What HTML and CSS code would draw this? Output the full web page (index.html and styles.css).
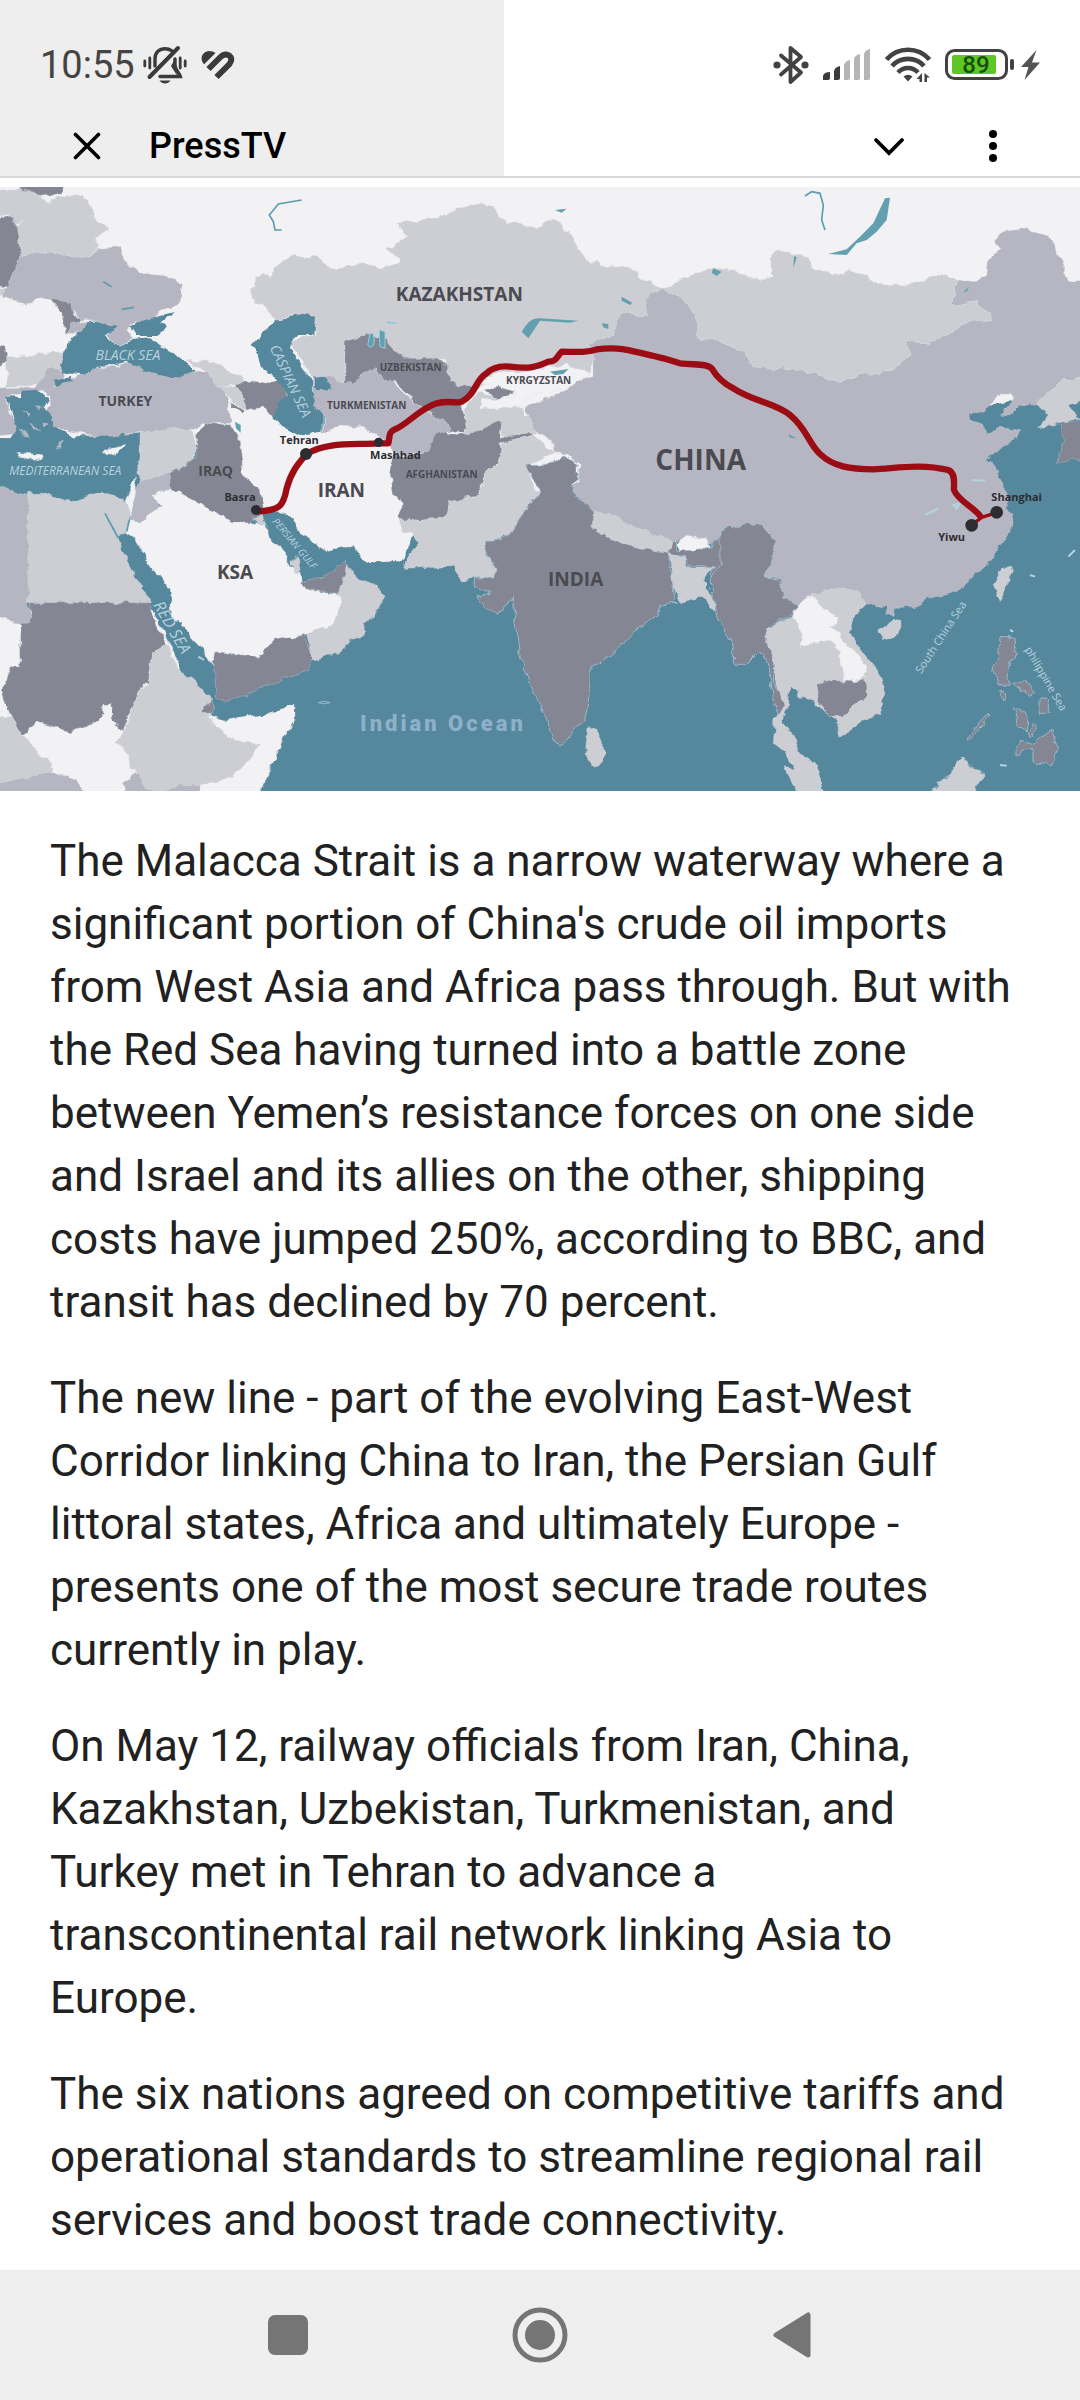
FILE: index.html
```html
<!DOCTYPE html>
<html lang="en">
<head>
  <meta charset="UTF-8" />
  <meta name="viewport" content="width=device-width, initial-scale=1.0"/>
  <title>PressTV</title>
  <link rel="stylesheet" href="styles.css">
</head>
<body>

<header class="top">
  <!-- Status bar -->
  <div class="status-bar">
    <div class="status-left">
      <span class="time">10:55</span>
      <svg class="bell" width="44" height="40" viewBox="0 0 44 40" fill="none" stroke="#3b3b3b" stroke-width="3.4" stroke-linecap="round">
        <path d="M1.8 16v5M6.8 13v10M37.2 13v10M42.2 16v5" stroke-width="2.8"/>
        <path d="M12 21v-7.500C12 7.500 16.500 3.700 22 3.700c2.800 0 5 .8 6.500 2"/>
        <path d="M32 14l-4 7 6 9.500z" fill="#3b3b3b" stroke="none"/>
        <path d="M32 14v6c0 5 4 7 5.300 11.500H17"/>
        <path d="M6.500 32L35 3" stroke-width="4"/>
        <path d="M16.500 35.500h11c-2.500 4-8.500 4-11 0z" fill="#3b3b3b" stroke="none"/>
      </svg>
      <svg class="heart" width="34" height="30" viewBox="0 0 34 30" fill="none" stroke="#3b3b3b" stroke-width="6">
        <path d="M8.500 1c2.500 0 4.300.7 6 2L3.200 14.300C-2.500 8.500 2 1 8.500 1z" fill="#3b3b3b" stroke="none"/>
        <path d="M7.500 19L19.500 7C25.500 1 34 7 28.500 14L15.500 27"/>
      </svg>
    </div>
    <div class="status-right">
      <svg class="bluetooth" width="36" height="40" viewBox="0 0 36 40" fill="none" stroke="#424242" stroke-width="3.800" stroke-linecap="round" stroke-linejoin="round">
        <path d="M8 10.500L28 27.500 17.500 37V3L28 12 8 29.500"/>
        <circle cx="4" cy="20" r="3.600" fill="#424242" stroke="none"/>
        <circle cx="32" cy="20" r="3.600" fill="#424242" stroke="none"/>
      </svg>
      <svg class="signal" width="48" height="32" viewBox="0 0 48 32">
        <path d="M0 31v-4q1-4 7-4v6q0 2-2 2z" fill="#3b3b3b"/>
        <path d="M11 31V22q1-4 6-5v12q0 2-2 2z" fill="#3b3b3b"/>
        <path d="M21 31V16q1-4 6-5v18q0 2-2 2zM31 31V10q1-4 6-5v24q0 2-2 2zM41 31V5q1-4 6-5v29q0 2-2 2z" fill="#b5b5b5"/>
      </svg>
      <svg class="wifi" width="46" height="36" viewBox="0 0 46 36" fill="none" stroke="#424242" stroke-width="4.600">
        <path d="M1.500 12.500C13-0.500 33-0.500 44.500 12.500"/>
        <path d="M7 19C15.500 9.500 30.500 9.500 39 19"/>
        <path d="M13 25.500C18.500 19.500 27.500 19.500 33 25.500"/>
        <path d="M18.500 29.500q4.500-3.500 9 0L23 34.500z" fill="#424242" stroke="none"/>
        <path d="M37 26v9h-2.500v-3L31.500 32zM39.500 35v-9L45 30.500h-3V35z" fill="#424242" stroke="none"/>
      </svg>
      <svg class="battery" width="70" height="32" viewBox="0 0 70 32">
        <rect x="1.500" y="1.500" width="60" height="28" rx="8" fill="#fff" stroke="#424242" stroke-width="3"/>
        <rect x="7" y="6" width="44" height="19" rx="2" fill="#5fc626"/>
        <rect x="65" y="10" width="4" height="11" rx="2" fill="#424242"/>
        <text class="battery-level" x="31" y="24" text-anchor="middle">89</text>
      </svg>
      <svg class="bolt" width="19" height="30" viewBox="0 0 19 30">
        <path d="M15.500 0L0 17h7.500L3.500 30 19 12.500h-8z" fill="#555"/>
      </svg>
    </div>
  </div>

  <!-- Browser bar -->
  <div class="app-bar">
    <button class="icon-btn" aria-label="Close">
      <svg width="28" height="28" viewBox="0 0 28 28" fill="none" stroke="#000" stroke-width="3.600" stroke-linecap="round"><path d="M2.500 2.500l23 23M25.500 2.500l-23 23"/></svg>
    </button>
    <h1>PressTV</h1>
    <button class="icon-btn" aria-label="Minimize">
      <svg width="32" height="20" viewBox="0 0 32 20" fill="none" stroke="#000" stroke-width="3.800" stroke-linecap="round"><path d="M3 4l13 13L29 4"/></svg>
    </button>
    <button class="icon-btn" aria-label="More options">
      <svg width="10" height="34" viewBox="0 0 10 34"><circle cx="5" cy="5" r="4"/><circle cx="5" cy="17" r="4"/><circle cx="5" cy="29" r="4"/></svg>
    </button>
  </div>
</header>

<main>
  <svg class="map" viewBox="0 21 3240 1812" role="img" aria-label="Rail route from China to Iran">
    <defs>
      <filter id="coast" x="-5%" y="-5%" width="110%" height="110%" color-interpolation-filters="sRGB">
        <feTurbulence type="fractalNoise" baseFrequency="0.03" numOctaves="3" seed="4" result="noise"/>
        <feDisplacementMap in="SourceGraphic" in2="noise" scale="24" xChannelSelector="R" yChannelSelector="G"/>
      </filter>
    </defs>
    <rect class="sea" y="21" width="3240" height="1812"/>

    <g filter="url(#coast)">
      <!-- Base land -->
      <path class="white" d="M-40-20H3280V595L2900 700 2900 800 2000 1050 1900 900 1250 1050 1200 1150 1090 1145 1060 1095 980 1115 900 1060 860 1000 800 990 600 800 430 760-40 780z"/>
      <path class="white" d="M-40 1290H460L560 1500 640 1610 680 1620 790 1605 885 1575 885 1620 850 1680 820 1750 765 1870H-40z"/>

      <!-- Eastern Europe -->
      <path class="light" d="M-40 30H110L145 70 110 120 40 130 25 108-40 105z"/>
      <path class="dark" d="M45-20H192L185 40 145 52 110 38 60 30z"/>
      <path class="light" d="M50 200L45 135 110 110 150 60 200 42 260 55 280 110 325 150 290 170 295 205 260 235 130 215 60 230z"/>
      <path class="dark" d="M-40 112H45L58 200 60 270 20 320-40 315z"/>
      <path class="light" d="M-40 320L20 325 10 345-40 380z"/>
      <path class="mid" d="M10 340L60 230 130 215 260 235 300 205 360 200 375 240 400 260 415 275 500 285 550 315 540 370 490 390 460 410 400 430 380 450 400 475 360 500 325 470 340 445 300 425 240 420 210 370 150 355 70 370 10 355z"/>
      <path class="dark" d="M150 352L215 370 222 400 240 420 205 450 195 465 185 400z"/>
      <path class="mid" d="M200 460L215 430 245 425 270 430 235 460z"/>
      <path class="dark" d="M-40 495L15 500 25 550-40 580z"/>
      <path class="light" d="M20 530L90 530 150 515 205 520 190 575 130 610 20 620z"/>
      <path class="mid" d="M-40 625L110 620 150 560 190 575 190 600 120 640 60 640 20 655 30 700 70 760-40 770z"/>
      <path class="mid" d="M125 630L200 600 300 565 400 550 470 585 580 575 640 570 670 620 690 700 690 730 620 730 560 750 430 755 320 770 240 760 160 740 140 700 150 650z"/>
      <path class="light" d="M560 540L640 550 730 590 735 615 660 620 620 575z"/>
      <path class="light" d="M660 620L720 625 745 690 700 670z"/>
      <path class="dark" d="M705 620L740 600 800 610 840 600 860 650 820 715 790 675 740 690 725 640z"/>
      <path class="dark" d="M690 670L735 690 725 700 700 685z"/>

      <!-- Central Asia -->
      <path class="light" d="M755 340L765 300 790 280 810 295 820 265 880 225 960 235 990 268 1080 250 1140 265 1200 250 1200 235 1160 210 1190 190 1220 170 1190 130 1300 115 1440 70 1480 80 1495 120 1560 130 1600 145 1660 115 1700 150 1765 255 1785 240 1820 260 1880 255 1930 300 1985 325 1940 350 1940 405 1860 400 1840 470 1765 490 1785 545 1770 580 1700 555 1560 575 1480 590 1440 620 1360 620 1340 595 1330 540 1210 545 1130 490 1035 480V612L940 590 880 500 860 480 945 465 940 410 880 403 820 425 800 380 765 370z"/>
      <path class="mid" d="M940 590L1000 590 1035 612 1080 590 1120 565 1150 580 1190 620 1230 655 1270 690 1355 735V755L1320 760 1290 810 1190 825 1160 780 1080 740 1020 735 970 755V700L940 690z"/>
      <path class="dark" d="M1035 480L1100 463 1160 480 1210 535H1310L1340 560 1345 600 1380 620 1440 620 1400 655 1380 680 1400 720 1390 760 1350 750 1340 730 1260 680 1230 650 1190 610 1160 600 1150 580 1120 565 1080 590 1060 610 1035 612z"/>
      <path class="light" d="M1390 690L1430 640 1500 650 1440 680 1570 685 1575 710 1600 710 1610 760 1560 770 1510 780 1500 730 1470 745 1440 760 1390 765 1400 720z"/>
      <path class="white" d="M1440 610L1480 580 1560 575 1700 555 1770 580 1740 600 1700 625 1580 650 1560 680 1480 690 1440 680V660L1540 650 1545 635 1500 620z"/>
      <path class="dark" d="M1450 630L1490 618 1545 635 1500 655 1480 645z"/>
      <path class="dark" d="M1185 830L1290 810 1310 755 1390 765 1450 750 1485 720 1505 725 1500 775 1560 760 1590 755 1600 765 1520 785 1500 790 1505 820 1490 850 1460 870 1440 920 1435 945 1400 950 1350 975 1345 1010 1260 1025 1190 1010 1210 970 1180 940 1170 880z"/>
      <path class="light" d="M1190 1010L1260 1025 1345 1010 1350 965 1435 945 1450 900 1460 870 1495 850 1505 790 1600 765 1640 800 1670 820 1590 845V880L1600 930 1620 935 1570 1000 1530 1060 1480 1080 1450 1080 1470 1140 1490 1170 1485 1190 1420 1195 1390 1205 1360 1160 1210 1165 1220 1130 1260 1095 1240 1060 1210 1050z"/>

      <!-- Mongolia and China -->
      <path class="mid" d="M1575 680L1700 630 1740 600 1785 590V545L1765 490 1840 470 1860 400 1940 405V350L1985 325 2060 365 2090 400V470L2160 482 2225 515 2260 560 2410 572 2515 605 2600 580 2660 575 2730 525 2720 485 2790 488 2850 460 2890 430 2975 418 2970 400 2930 365 2850 375 2875 300 2920 308 2960 290 2965 240 3000 205 2980 180 3000 160 3080 147 3150 170 3180 230 3205 305H3280V590L3185 600 3140 640 3110 668 3060 680 3025 708 3005 705 3045 655 3035 636 3005 638 2970 682 2950 695 2910 700 2912 722 2945 730 2955 758 2970 760 3000 742 3060 755 3050 775 3005 800 2960 838 2990 870 3010 920 3030 950 3010 985 3045 1005 3035 1050 2990 1105 2965 1150 2900 1210 2860 1240 2790 1255 2750 1275 2690 1285 2680 1310 2660 1300 2665 1280 2600 1275 2575 1235 2530 1222 2450 1245 2400 1280 2350 1250 2345 1200 2295 1190 2325 1110V1085L2285 1035 2240 1030 2180 1055 2125 1095 2100 1075 2060 1065 2020 1090 1960 1065 1900 1040 1830 1000 1780 995 1730 945 1715 920 1740 905 1735 860 1700 820 1665 815 1660 780 1620 760 1600 740 1590 710z"/>
      <path class="light" d="M1985 325L2060 290 2140 265 2200 270 2240 290 2290 300 2310 290V230L2340 208 2430 235 2440 265 2500 285 2550 272 2600 290 2630 312 2700 320 2760 310 2810 282 2875 298 2850 375 2930 365 2970 400 2975 418 2890 430 2850 460 2790 488 2720 485 2730 525 2660 575 2600 580 2515 605 2410 572 2260 560 2225 515 2160 482 2090 470V400L2060 365z"/>
      <path class="light" d="M3105 665L3140 640 3190 600 3280 590V655L3205 675 3235 715 3160 735 3120 740 3140 700z"/>
      <path class="dark" d="M3180 730L3280 715V830L3170 850 3185 780z"/>

      <!-- Middle East -->
      <path class="light" d="M420 755L560 745 585 750V840L510 880 430 910 410 880 420 830z"/>
      <path class="mid" d="M430 900L510 880 520 925 455 945 480 980 450 1000 440 1020H390L410 930z"/>
      <path class="white" d="M405 890L412 920 390 1010 375 960z"/>
      <path class="white" d="M390 1020H440L450 1000 480 975 455 945 520 925 570 930 620 965 690 1025H750L790 1040 830 1090 870 1150 910 1200 930 1230 1020 1245 1025 1270 1005 1330 920 1365 830 1380 770 1430 690 1420 650 1415 635 1450 600 1395 520 1310 510 1230 460 1170 400 1070 380 1060z"/>
      <path class="dark" d="M620 730L690 735 720 780 730 850 720 880 780 930 790 985 750 1025H690L580 960 515 925 510 880 590 840V760z"/>
      <path class="light" d="M755 1015L785 1000 800 1040 775 1035z"/>
      <path class="dark" d="M650 1415L770 1430 830 1380 910 1365 940 1435 920 1475 820 1510 690 1560H650L635 1440z"/>
      <path class="light" d="M920 1365L1005 1330 1025 1260 1010 1240 1035 1150 1050 1170 1080 1200 1130 1220 1155 1255 1120 1310 1095 1325 1090 1365 1050 1385 1020 1415 940 1440z"/>
      <path class="dark" d="M905 1200L970 1195 1040 1140 1035 1180 1015 1240 930 1230z"/>
      <path class="light" d="M875 1140L895 1130 900 1170 885 1185z"/>

      <!-- Africa -->
      <path class="mid" d="M-40 905L40 930 85 945V1268L95 1330 60 1335-40 1300z"/>
      <path class="light" d="M80 940L140 940 210 965 300 940 370 955 390 1000 380 1060 350 1065 315 1000 360 1090 410 1200 455 1268H85z"/>
      <path class="dark" d="M92 1268H450L465 1330 500 1390 455 1420 440 1500 380 1610 370 1650 340 1620 335 1570H310V1610L260 1640 210 1655 110 1625 75 1665H50L30 1600 10 1550 5 1530 30 1460H62V1330H92z"/>
      <path class="light" d="M500 1390L530 1460 600 1520 640 1560 630 1600 640 1640 700 1680 785 1690 700 1790 600 1820 540 1815 480 1840 440 1830 400 1770 370 1700 340 1690 370 1660 400 1570 440 1510 455 1420z"/>
      <path class="dark" d="M605 1580L640 1560 635 1600 605 1600z"/>
      <path class="light" d="M-40 1610H40L60 1660 150 1750 160 1780-40 1815z"/>
      <path class="mid" d="M-40 1815L150 1780 230 1800 280 1870H-40z"/>
      <path class="mid" d="M370 1810L410 1775 440 1830 480 1838 540 1815 600 1820V1870H390z"/>

      <!-- South Asia -->
      <path class="dark coastline" d="M1580 850L1650 850 1690 825 1720 850 1735 880V900L1715 915 1730 950 1790 1000 1770 1040 1850 1085 1940 1110 2010 1120V1075L2030 1085V1110H2130L2140 1080 2180 1050 2230 1030 2200 1110 2160 1200 2130 1190 2140 1160 2060 1155V1130L2010 1125V1160L2020 1200 2030 1270 1980 1275 1975 1310 1920 1340 1880 1380 1830 1430 1790 1450 1770 1465V1530L1755 1620 1730 1640 1700 1680 1680 1692 1660 1680 1640 1620 1600 1540 1560 1430 1545 1330 1540 1250 1520 1280 1490 1303 1460 1290 1430 1250 1470 1235 1420 1215V1195L1485 1190 1490 1170 1470 1140 1450 1080 1480 1080 1530 1060 1600 960 1620 935 1600 900z"/>
      <path class="light" d="M1790 995L1830 1000 1900 1040 1960 1065 2020 1080 2008 1120 1940 1110 1850 1085 1770 1040z"/>
      <path class="white" d="M2030 1095L2050 1065 2100 1070 2128 1085 2130 1108 2040 1112z"/>
      <path class="light" d="M2010 1120L2060 1135V1160L2140 1162 2110 1200 2140 1250 2150 1300 2130 1290 2110 1245 2040 1270 2020 1200z"/>
      <path class="light" d="M1765 1640L1790 1650 1820 1720 1810 1750 1775 1757 1755 1720z"/>

      <!-- South East Asia -->
      <path class="dark coastline" d="M2160 1060L2200 1038 2240 1030 2285 1035 2325 1085V1110L2295 1190 2345 1200 2350 1250 2400 1280 2370 1310 2310 1335 2295 1370 2325 1450 2320 1500 2350 1570V1600L2335 1610 2320 1550 2305 1450 2280 1410 2240 1450H2200V1400L2160 1320 2150 1290 2130 1200 2160 1150z"/>
      <path class="light" d="M2305 1340L2370 1315 2400 1290 2430 1245 2530 1220 2575 1235 2600 1275 2560 1310 2545 1350 2590 1420 2640 1480 2655 1540 2640 1600 2580 1630 2520 1675 2515 1640 2480 1600 2440 1560 2395 1550V1527H2370L2365 1580 2345 1620 2370 1660 2400 1720 2450 1750 2475 1870H2400L2380 1760 2350 1710 2320 1690 2325 1620 2350 1580 2325 1500V1450L2295 1370z"/>
      <path class="white" d="M2420 1250H2440L2470 1290 2515 1310 2510 1335 2490 1340 2540 1390 2600 1460V1490L2550 1510 2530 1500 2520 1420 2490 1380 2400 1400 2405 1350 2380 1320V1295z"/>
      <path class="dark" d="M2450 1510L2490 1500 2560 1505 2595 1500 2600 1550 2560 1580 2530 1615 2490 1610 2460 1570z"/>
      <path class="light" d="M2635 1350L2680 1320 2705 1325 2690 1365 2650 1382z"/>
      <path class="light" d="M3035 1158L3030 1200 3000 1265 2980 1220 3000 1170z"/>
      <path class="light" d="M2355 1760L2420 1770 2500 1870H2400z"/>
      <path class="light" d="M2780 1850L2840 1790 2890 1725 2910 1760 2955 1780 2910 1870H2780z"/>
      <path class="dark coastline" d="M3000 1370L3045 1370 3048 1420 3020 1480 3030 1510 3000 1510 2975 1470 2995 1430zM3000 1530L3020 1540 3018 1565 3000 1550zM3035 1510L3075 1505 3105 1540 3090 1550zM3040 1580L3080 1600 3080 1650 3055 1640zM3120 1555L3145 1560 3145 1600 3120 1600zM3100 1630L3110 1640 3095 1670 3085 1660zM3100 1690L3155 1650 3175 1710 3145 1760 3100 1740 3095 1705 3045 1730 3045 1700 3070 1680zM2965 1600L2970 1610 2905 1685 2895 1680z"/>

      <!-- Inland seas -->
      <path class="sea" d="M270 425L300 425 350 445 320 470 360 500 400 480 450 475 520 520 592 570 550 590 470 585 380 548 310 560 250 583 182 575 200 500 235 460z"/>
      <path class="sea" d="M392 440L430 415 528 396 480 430 498 435 472 468 408 468z"/>
      <path class="sea" d="M160 600L210 588 215 606 170 614z"/>
      <path class="sea" d="M20 650L60 655 65 632 105 630 145 655 130 680 150 700 160 740 200 755 240 790H-40V772L30 780 55 745 35 700z"/>
      <path class="white" d="M310 812L345 800 385 793 350 822 320 830zM50 820L130 828 120 840 55 832z"/>
      <path class="mid" d="M70 690L90 700 85 712zM110 680L125 685 118 695zM90 730L120 750 105 750zM170 800L190 785 180 808zM60 750L85 770 70 770zM130 725L145 735 130 740z"/>
      <path class="sea" d="M820 425L890 403 945 410 940 465 885 465 870 500 905 560 935 590 945 690 968 700V755L900 765 850 740 820 715 830 670 860 645 830 600 785 560 775 520 755 495 790 455z"/>
      <path class="sea" d="M945 595L970 590 990 630 945 630z"/>
    </g>

    <!-- Lakes -->
    <path class="lake" d="M2655 55L2670 53 2660 120 2630 155 2600 180 2570 190 2540 225 2485 222 2540 208 2580 170 2620 130z"/>
    <path class="lake" d="M1565 455Q1590 410 1620 415L1735 422 1710 428 1620 422 1585 475z"/>
    <path class="lake" d="M1650 575L1705 567 1690 582 1665 585zM1805 430L1825 432V447L1810 442zM1865 350L1897 368 1890 375 1865 362zM2140 265L2165 275 2150 288 2135 278zM2382 228L2390 232 2380 265zM1665 90L1700 86 1685 98zM2890 335L2908 320 2900 335zM2365 762L2390 775 2370 773zM705 725L722 735 722 758 708 745z"/>
    <path class="lake aral" d="M1110 460Q1125 455 1122 490 1115 510 1103 495zM1138 450L1155 455 1155 505 1140 500zM1160 425L1190 430 1165 430z"/>
    <path class="river" d="M905 60L835 72 808 105 820 125 825 150 845 150M2415 48L2435 35 2460 40 2470 75 2465 120 2475 150M310 305L335 320M365 388L402 382"/>
    <path class="river" d="M315 1000L355 1075M388 1020L380 1055"/>
    <path class="islands" d="M2860 975L2880 970 2870 985zM2775 1005L2815 985M3090 1185L3105 1190M3205 1130L3225 1110M3030 1350L3040 1355M3000 1755L3020 1757M2450 1820L2465 1818M2955 902L2915 900M595 1430L612 1440"/>
    <path class="outline" d="M955 1568Q975 1560 990 1568 975 1575 955 1568z"/>

    <!-- Route -->
    <path class="route" d="M770 995C840 990 850 980 860 925 875 870 900 845 920 822 980 785 1060 795 1135 790H1165C1170 770 1165 755 1185 748 1220 735 1260 685 1310 670 1350 660 1370 672 1385 665 1430 640 1425 600 1460 580 1480 560 1510 558 1530 560 1590 568 1610 560 1645 545 1670 545 1670 530 1685 515 1720 515 1760 520 1790 508 1850 500 1870 505 1990 535L2040 550C2090 555 2120 550 2135 565 2150 590 2170 610 2200 625 2260 665 2330 670 2370 705 2420 745 2425 790 2460 822 2500 860 2550 868 2620 868 2690 865 2760 850 2845 870 2870 880 2860 920 2862 930 2875 965 2930 985 2945 1015"/>
    <path class="route branch" d="M2915 1035L2945 1012 2990 998"/>
    <g class="city">
      <circle cx="918" cy="822" r="18"/>
      <circle cx="1136" cy="787" r="14"/>
      <circle cx="768" cy="990" r="15"/>
      <circle cx="2915" cy="1036" r="19"/>
      <circle cx="2990" cy="997" r="19"/>
    </g>

    <!-- Labels -->
    <g class="label" text-anchor="middle">
      <text class="size-xl" x="2102" y="869">CHINA</text>
      <text class="size-l" x="1378" y="364">KAZAKHSTAN</text>
      <text class="size-l" x="1727" y="1219">INDIA</text>
      <text class="size-l" x="1024" y="951">IRAN</text>
      <text class="size-l" x="705" y="1197">KSA</text>
      <text class="size-m" x="376" y="679">TURKEY</text>
      <text class="size-m" x="647" y="889">IRAQ</text>
      <text class="size-s" x="1100" y="688">TURKMENISTAN</text>
      <text class="size-s" x="1232" y="574">UZBEKISTAN</text>
      <text class="size-s" x="1616" y="611">KYRGYZSTAN</text>
      <text class="size-s" x="1325" y="893">AFGHANISTAN</text>
    </g>
    <g class="label city-name" text-anchor="middle">
      <text x="898" y="793">Tehran</text>
      <text x="1186" y="837">Mashhad</text>
      <text x="720" y="963">Basra</text>
      <text x="3050" y="963">Shanghai</text>
      <text x="2855" y="1083">Yiwu</text>
    </g>
    <g class="sea-name" text-anchor="middle">
      <text class="size-sea" x="384" y="541">BLACK SEA</text>
      <text x="196" y="886">MEDITERRANEAN SEA</text>
      <text class="size-sea" transform="translate(858 609) rotate(65)">CASPIAN SEA</text>
      <text class="size-red" transform="translate(502 1350) rotate(60)">RED SEA</text>
      <text class="size-gulf" transform="translate(876 1097) rotate(50)">PERSIAN GULF</text>
      <text class="upright" transform="translate(2832 1378) rotate(-57)">South China Sea</text>
      <text class="upright" transform="translate(3128 1502) rotate(60)">philippine Sea</text>
    </g>
    <text class="ocean-name" x="1080" y="1653">Indian Ocean</text>
  </svg>

  <article>
    <p>The Malacca Strait is a narrow waterway where a significant portion of China's crude oil imports from West Asia and Africa pass through. But with the Red Sea having turned into a battle zone between Yemen’s resistance forces on one side and Israel and its allies on the other, shipping costs have jumped 250%, according to BBC, and transit has declined by 70 percent.</p>
    <p>The new line - part of the evolving East-West Corridor linking China to Iran, the Persian Gulf littoral states, Africa and ultimately Europe - presents one of the most secure trade routes currently in play.</p>
    <p>On May 12, railway officials from Iran, China, Kazakhstan, Uzbekistan, Turkmenistan, and Turkey met in Tehran to advance a transcontinental rail network linking Asia to Europe.</p>
    <p>The six nations agreed on competitive tariffs and operational standards to streamline regional rail services and boost trade connectivity.</p>
  </article>
</main>

<nav class="nav-bar">
  <button aria-label="Recent apps">
    <svg width="40" height="40" viewBox="0 0 40 40"><rect width="40" height="40" rx="7" fill="#757575"/></svg>
  </button>
  <button aria-label="Home">
    <svg width="56" height="56" viewBox="0 0 56 56"><circle cx="28" cy="28" r="25" fill="none" stroke="#757575" stroke-width="5"/><circle cx="28" cy="28" r="15" fill="#757575"/></svg>
  </button>
  <button aria-label="Back">
    <svg width="38" height="46" viewBox="0 0 38 46"><path d="M35 3v40L3 23z" fill="#757575" stroke="#757575" stroke-width="5" stroke-linejoin="round"/></svg>
  </button>
</nav>

</body>
</html>
```

FILE: styles.css
```css
body {
  font-family: Roboto, sans-serif;
  margin: 0;
  min-height: 100vh;
  display: flex;
  flex-direction: column;
  background: #fff;
  color: #212121;
}

button {
  display: flex;
  align-items: center;
  justify-content: center;
  padding: 0;
  border: none;
  background: none;
  cursor: pointer;
}

/* the grey part is the page loading progress */
.top {
  background: linear-gradient(to right, #eee 46.7%, #fff 46.7%);
  border-bottom: 2px solid #d8d8d8;
  padding-top: 40px;
}

.status-bar {
  display: flex;
  justify-content: space-between;
  height: 50px;
  padding: 0 40px;
  margin-bottom: 26px;
}

.status-left,
.status-right {
  display: flex;
  align-items: center;
}

.time {
  font-size: 38px;
  color: #444;
}

.bell {
  margin-left: 8px;
}

.heart {
  margin-left: 14px;
}

.status-right {
  gap: 14px;
}

.battery {
  margin-right: -8px;
}

.battery-level {
  font-size: 24px;
  font-weight: 500;
  fill: #14500a;
}

.app-bar {
  display: flex;
  align-items: center;
  height: 60px;
  padding: 0 63px;
}

.app-bar h1 {
  flex: 1;
  margin: 0 0 0 38px;
  font-size: 36px;
  font-weight: 500;
  color: #000;
}

.icon-btn {
  width: 48px;
  height: 48px;
}

.icon-btn + .icon-btn {
  margin-left: 56px;
}

main {
  flex: 1;
  padding-top: 9px;
}

.map {
  display: block;
  width: 100%;
}

.sea {
  fill: #55879d;
}

.white,
.light,
.mid,
.dark {
  stroke: #d9dbe1;
  stroke-opacity: 0.5;
  stroke-width: 2;
}

.white {
  fill: #f2f1f4;
}

.light {
  fill: #cdced3;
}

.mid {
  fill: #b6b6c2;
}

.dark {
  fill: #848793;
}

.coastline {
  stroke: #a9c3d3;
  stroke-opacity: 0.8;
  stroke-width: 3;
}

.lake {
  fill: #62a0b0;
}

.aral {
  stroke: #8fd0dc;
  stroke-width: 3;
}

.river {
  fill: none;
  stroke: #5d9cae;
  stroke-width: 5;
}

.islands {
  fill: none;
  stroke: #b4d3e0;
  stroke-width: 6;
}

.outline {
  fill: none;
  stroke: #b4d3e0;
  stroke-width: 2;
}

.route {
  fill: none;
  stroke: #9c0c14;
  stroke-width: 19;
  stroke-linejoin: round;
}

.branch {
  stroke-width: 10;
}

.city {
  fill: #2d2c31;
}

.label {
  font-family: "Open Sans", sans-serif;
  font-weight: 700;
  fill: #4a4a50;
}

.size-xl {
  font-size: 84px;
}

.size-l {
  font-size: 57px;
}

.size-m {
  font-size: 42px;
}

.size-s {
  font-size: 30px;
}

.city-name {
  font-size: 33px;
  fill: #2d2c31;
}

.sea-name {
  font-family: "Open Sans", sans-serif;
  font-style: italic;
  font-size: 36px;
  fill: #b5d2df;
}

.size-sea {
  font-size: 42px;
}

.size-red {
  font-size: 48px;
}

.size-gulf {
  font-size: 30px;
}

.upright {
  font-size: 33px;
  font-style: normal;
}

.ocean-name {
  font-family: Roboto, sans-serif;
  font-size: 66px;
  font-weight: 900;
  letter-spacing: 9px;
  fill: #8db1c9;
}

article {
  padding: 39px 50px 18px;
  font-size: 44px;
  line-height: 63px;
}

article p {
  margin: 0 0 33px;
}

article p:last-child {
  margin-bottom: 0;
}

.nav-bar {
  display: flex;
  align-items: center;
  justify-content: center;
  gap: 196px;
  height: 130px;
  background: #efefef;
}

.nav-bar button {
  width: 56px;
  height: 56px;
}
```
